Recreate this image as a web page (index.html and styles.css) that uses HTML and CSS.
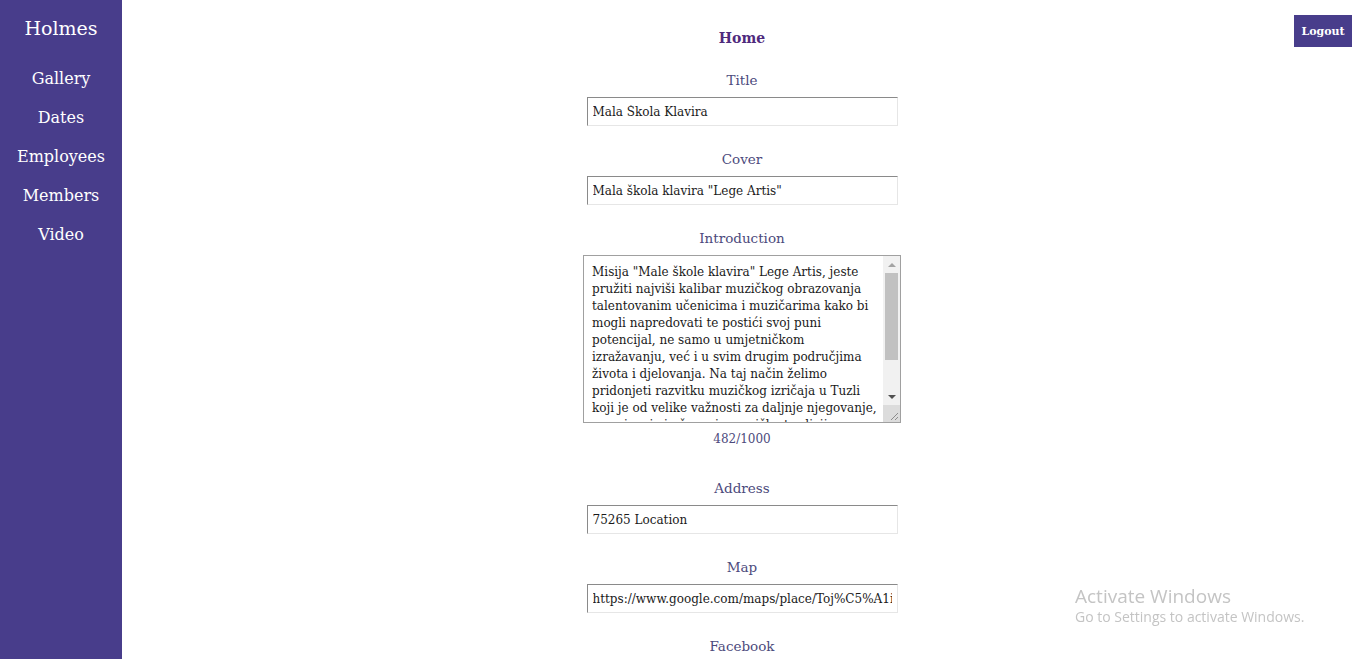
FILE: index.html
```html
<!DOCTYPE html>
<html lang="bs">
<head>
<meta charset="utf-8">
<title>Holmes</title>
<link rel="stylesheet" href="styles.css">
</head>
<body>
<div class="layout">
  <nav class="sidebar">
    <div class="brand">Holmes</div>
    <a class="nav-link" href="#">Gallery</a>
    <a class="nav-link" href="#">Dates</a>
    <a class="nav-link" href="#">Employees</a>
    <a class="nav-link" href="#">Members</a>
    <a class="nav-link" href="#">Video</a>
  </nav>
  <main class="main">
    <div class="topbar"><button class="logout">Logout</button></div>
    <h1 class="page-title">Home</h1>
    <form class="form">
      <div class="field">
        <label class="label">Title</label>
        <input class="input" type="text" value="Mala &Scaron;kola Klavira">
      </div>
      <div class="field">
        <label class="label">Cover</label>
        <input class="input" type="text" value="Mala škola klavira &quot;Lege Artis&quot;">
      </div>
      <div class="field">
        <label class="label">Introduction</label>
        <div class="textarea-box">
          <textarea class="textarea">Misija "Male škole klavira" Lege Artis, jeste pružiti najviši kalibar muzičkog obrazovanja talentovanim učenicima i muzičarima kako bi mogli napredovati te postići svoj puni potencijal, ne samo u umjetničkom izražavanju, već i u svim drugim područjima života i djelovanja. Na taj način želimo pridonjeti razvitku muzičkog izričaja u Tuzli koji je od velike važnosti za daljnje njegovanje, promicanje i očuvanje muzičke tradicije.</textarea>
          <div class="scrollbar">
            <div class="sb-btn"><span class="arrow-up"></span></div>
            <div class="sb-track"><div class="sb-thumb"></div></div>
            <div class="sb-btn"><span class="arrow-down"></span></div>
            <div class="sb-corner">
              <svg width="17" height="17" viewBox="0 0 17 17"><path d="M15 8 L8 15 M15 12 L12 15" stroke="#8c8c8c" stroke-width="1" fill="none"/></svg>
            </div>
          </div>
        </div>
        <div class="counter">482/1000</div>
      </div>
      <div class="field field-spaced">
        <label class="label">Address</label>
        <input class="input" type="text" value="75265 Location">
      </div>
      <div class="field">
        <label class="label">Map</label>
        <input class="input" type="text" value="https://www.google.com/maps/place/Toj%C5%A1i%C4%87i">
      </div>
      <div class="field">
        <label class="label">Facebook</label>
      </div>
    </form>
  </main>
</div>
<div class="watermark">
  <div class="wm-title">Activate Windows</div>
  <div class="wm-sub">Go to Settings to activate Windows.</div>
</div>
</body>
</html>
```
FILE: styles.css
```css
html, body {
  margin: 0;
  padding: 0;
  height: 100%;
  overflow: hidden;
  background: #fff;
  font-family: "DejaVu Serif", "Liberation Serif", serif;
}

.layout {
  display: flex;
  height: 100%;
}

.sidebar {
  width: 122px;
  flex: 0 0 122px;
  background: #483d8b;
  display: flex;
  flex-direction: column;
  align-items: center;
  padding-top: 15px;
  box-sizing: border-box;
}

.brand {
  color: #fff;
  font-size: 19px;
  line-height: 26px;
  margin-bottom: 18px;
}

.nav-link {
  color: #fff;
  text-decoration: none;
  font-size: 16px;
  line-height: 39px;
}

.main {
  flex: 1;
  position: relative;
  display: flex;
  flex-direction: column;
  align-items: center;
}

.topbar {
  position: absolute;
  top: 15px;
  right: 10px;
}

.logout {
  background: #483d8b;
  color: #fff;
  border: none;
  font-family: inherit;
  font-weight: bold;
  font-size: 11px;
  width: 58px;
  height: 32px;
  padding: 0;
}

.page-title {
  margin: 28px 0 0;
  font-size: 14px;
  line-height: 20px;
  font-weight: bold;
  color: #4f2a7d;
}

.form {
  display: flex;
  flex-direction: column;
  align-items: center;
  margin-top: 21px;
}

.field {
  display: flex;
  flex-direction: column;
  align-items: center;
  margin-bottom: 22px;
}

.field-spaced {
  margin-top: 8px;
}

.label {
  color: #4c4a7c;
  font-size: 13.5px;
  line-height: 22px;
  margin-bottom: 6px;
}

.input {
  width: 311px;
  height: 29px;
  box-sizing: border-box;
  border: 1px solid;
  border-color: #8a8a8a #e6e6e6 #e6e6e6 #8a8a8a;
  padding: 0 5px;
  font-family: inherit;
  font-size: 12px;
  line-height: 22px;
  color: #1a1a1a;
  outline: none;
}

.textarea-box {
  display: flex;
  width: 318px;
  height: 168px;
  box-sizing: border-box;
  border: 1px solid #a0a0a0;
  background: #fff;
}

.textarea {
  flex: 1;
  min-width: 0;
  border: none;
  outline: none;
  padding: 8px 6px 8px 8px;
  margin: 0;
  font-family: inherit;
  font-size: 12px;
  line-height: 17px;
  color: #1a1a1a;
  resize: none;
  overflow: hidden;
  background: transparent;
}

.scrollbar {
  width: 17px;
  flex: 0 0 17px;
  display: flex;
  flex-direction: column;
  background: #f1f1f1;
}

.sb-btn {
  height: 17px;
  flex: 0 0 17px;
  display: flex;
  align-items: center;
  justify-content: center;
}

.arrow-up {
  width: 0;
  height: 0;
  border-left: 4px solid transparent;
  border-right: 4px solid transparent;
  border-bottom: 4px solid #a3a3a3;
}

.arrow-down {
  width: 0;
  height: 0;
  border-left: 4px solid transparent;
  border-right: 4px solid transparent;
  border-top: 4px solid #505050;
}

.sb-track {
  flex: 1;
  padding: 0 2px;
}

.sb-thumb {
  height: 87px;
  background: #c1c1c1;
}

.sb-corner {
  height: 17px;
  flex: 0 0 17px;
  background: #dcdcdc;
  display: flex;
}

.counter {
  color: #4c4a7c;
  font-size: 12px;
  line-height: 16px;
  margin-top: 8px;
}

.watermark {
  position: fixed;
  left: 1075px;
  top: 585px;
  font-family: "Open Sans", "Noto Sans", sans-serif;
  color: #c4c4c4;
}

.wm-title {
  font-size: 19px;
  line-height: 22px;
}

.wm-sub {
  font-size: 14px;
  line-height: 20px;
}
```
